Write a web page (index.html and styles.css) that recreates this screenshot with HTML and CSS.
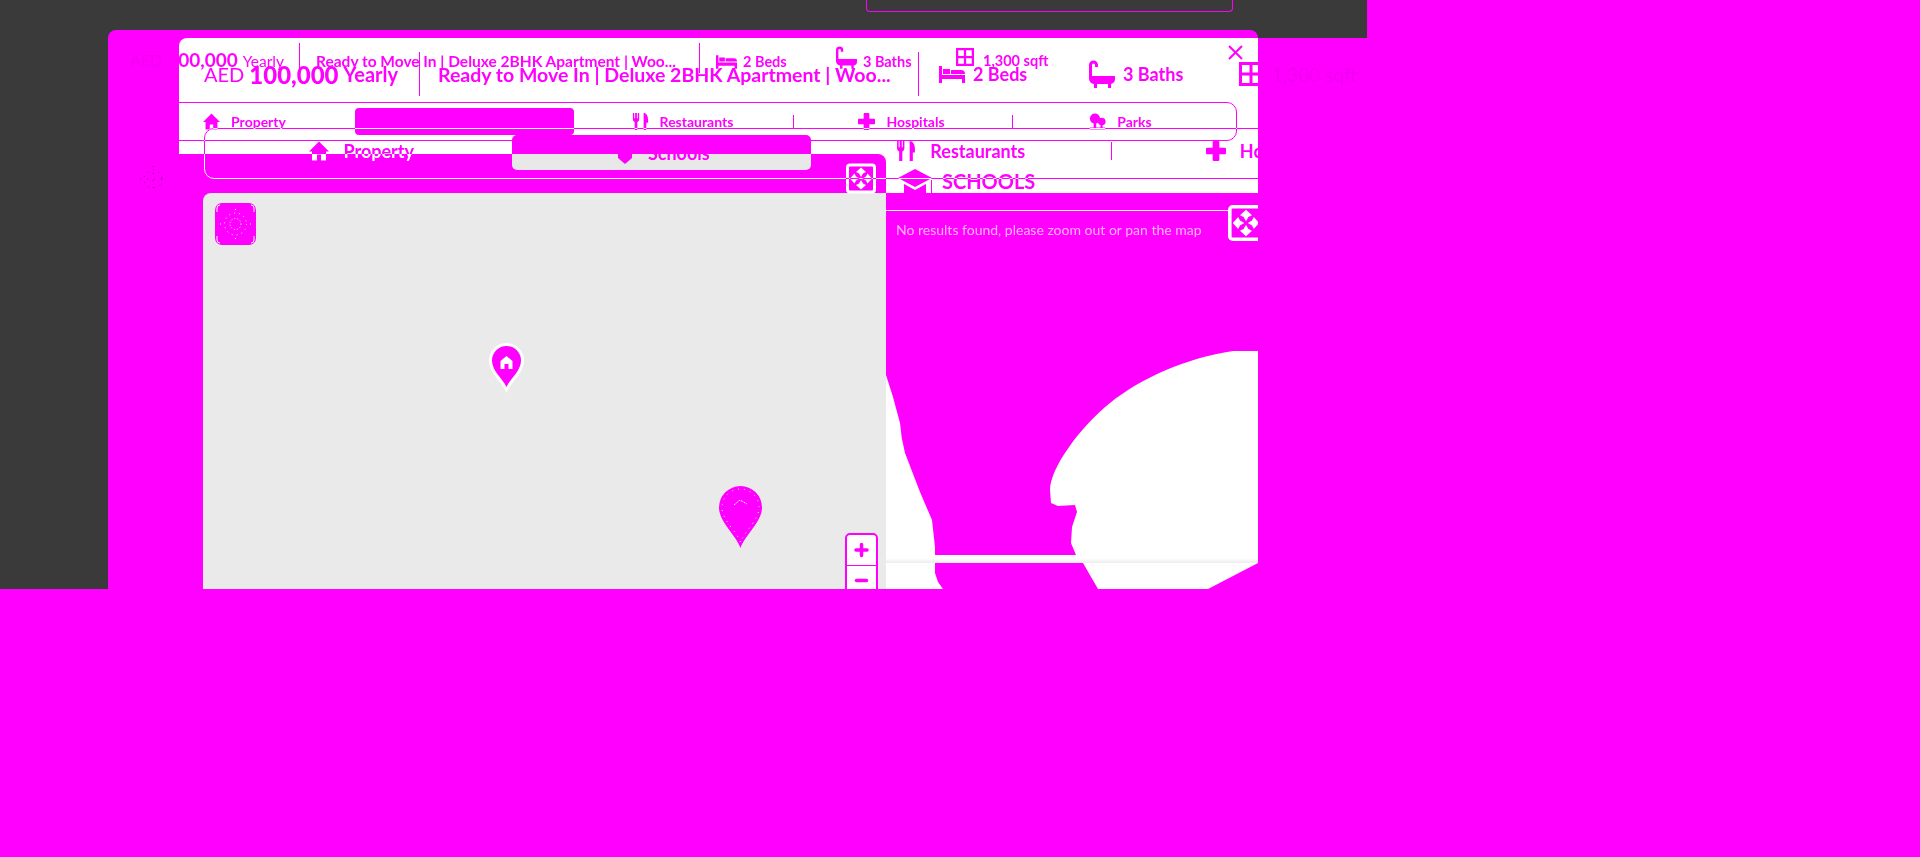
FILE: index.html
```html
<!DOCTYPE html>
<html lang="en">
<head>
    <title>Ready to Move In | Deluxe 2BHK Apartment</title>
    <meta charset="UTF-8">
    <meta name="viewport" content="width=device-width, initial-scale=1.0">
    <link rel="stylesheet" href="styles.css">
</head>
<body>
    <svg class="sprites" width="0" height="0">
        <symbol id="i-bed" viewBox="0 0 26 17"><path d="M0 0h3v9h23v8h-3v-4H3v4H0zM4 3h7v5H4zM12 4h10a4 4 0 0 1 4 4H12z"/></symbol>
        <symbol id="i-bath" viewBox="0 0 26 28"><path d="M0 5a4.500 4.500 0 0 1 9 0v2H6V5a1.500 1.500 0 0 0-3 0v11h23v3a5 5 0 0 1-4 5v4h-3v-4H8v4H5v-4a6 6 0 0 1-5-5z"/></symbol>
        <symbol id="i-window" viewBox="0 0 24 24"><path d="M1.500 1.500h21v21h-21zM12 1.500v21M1.500 12h21" fill="none" stroke="currentColor" stroke-width="3"/></symbol>
        <symbol id="i-house" viewBox="0 0 20 19"><path d="M10 0l10 10h-3v9h-5v-6H8v6H3v-9H0z"/></symbol>
        <symbol id="i-food" viewBox="0 0 17 19"><path d="M0 0h1.500v6h1V0h2v6h1V0H7v7a3 3 0 0 1-2 3v9H2v-9a3 3 0 0 1-2-3zM12 0c3 0 5 3 5 8v3h-2v8h-3z"/></symbol>
        <symbol id="i-plus" viewBox="0 0 18 18"><path d="M6 1a1 1 0 0 1 1-1h4a1 1 0 0 1 1 1v5h5a1 1 0 0 1 1 1v4a1 1 0 0 1-1 1h-5v5a1 1 0 0 1-1 1H7a1 1 0 0 1-1-1v-5H1a1 1 0 0 1-1-1V7a1 1 0 0 1 1-1h5z"/></symbol>
        <symbol id="i-tree" viewBox="0 0 20 19"><circle cx="7" cy="6" r="6"/><circle cx="15" cy="9.500" r="4.500"/><path d="M5.500 10h3v7h-3zM13.500 10h2.500v7h-2.500zM1 16.500h18V19H1z"/></symbol>
        <symbol id="i-cap" viewBox="0 0 34 24"><path d="M17 0l17 9-17 9L0 9zM6 15l11 6 11-6v9H6z"/></symbol>
        <symbol id="i-shield" viewBox="0 0 18 18"><path d="M9 0l9 5-2 1v6l-7 6-7-6V6L0 5z"/></symbol>
        <symbol id="i-expand" viewBox="0 0 30 30"><rect width="30" height="30" rx="4" fill="#fff"/><rect x="3" y="3" width="24" height="24" rx="1" fill="#f0f"/><path d="M15 13.500l-2-3.500-3-1.500 5-4.500 5 4.500-3 1.500zM15 16.500l2 3.500 3 1.500-5 4.500-5-4.500 3-1.500zM13.500 15l-3.500 2-1.500 3-4.500-5 4.500-5 1.500 3zM16.500 15l3.500-2 1.500-3 4.500 5-4.500 5-1.500-3z" fill="#fff"/></symbol>
    </svg>

    <div class="screen">
        <div class="topbar"><div class="search-box"></div></div>
        <div class="screen-row">
            <div class="sidebar"></div>
            <div class="modal">
                <span class="ghost ghost-aed">AED</span>
                <span class="ghost ghost-area">1,300 sqft</span>
                <svg class="ghost ghost-nav" width="26" height="26" viewBox="0 0 26 26"><circle cx="13" cy="13" r="9" fill="none" stroke="#900090" stroke-dasharray="1 5"/><path d="M13 0v26M0 13h26" stroke="#900090" stroke-dasharray="1 6"/></svg>

                <div class="sheet">
                    <div class="upper">
                        <div class="facts">
                            <div class="price"><span>AED</span> <b>100,000</b> <span>Yearly</span></div>
                            <div class="title">Ready to Move In | Deluxe 2BHK Apartment | Woo...</div>
                            <div class="spec"><svg class="icon-bed"><use href="#i-bed"/></svg>2 Beds</div>
                            <div class="spec"><svg class="icon-bath"><use href="#i-bath"/></svg>3 Baths</div>
                            <div class="spec spec-area"><svg class="icon-window"><use href="#i-window"/></svg>1,300 sqft</div>
                        </div>
                        <nav class="tabs">
                            <a class="tab"><svg><use href="#i-house"/></svg>Property</a>
                            <a class="tab tab-active"><svg><use href="#i-cap"/></svg>Schools</a>
                            <a class="tab"><svg><use href="#i-food"/></svg>Restaurants</a>
                            <a class="tab tab-line"><svg><use href="#i-plus"/></svg>Hospitals</a>
                            <a class="tab tab-line"><svg><use href="#i-tree"/></svg>Parks</a>
                        </nav>
                    </div>

                    <div class="lower">
                        <div class="map-col">
                            <div class="map">
                                <button class="locate">
                                    <svg width="41" height="42" viewBox="0 0 41 42"><path d="M2 9V5a3 3 0 0 1 3-3M36 2a3 3 0 0 1 3 3v4M39 33v4a3 3 0 0 1-3 3M5 40a3 3 0 0 1-3-3v-4" fill="none" stroke="#fff"/><circle cx="20.500" cy="21" r="11" fill="none" stroke="#fff" stroke-dasharray="1 4"/><circle cx="20.500" cy="21" r="5.500" fill="none" stroke="#fff" stroke-dasharray="1 2"/><path d="M20.500 6v1M20.500 35v1M5 21h1M35 21h1" stroke="#fff"/></svg>
                                </button>
                                <svg class="pin pin-home" width="35" height="50" viewBox="0 0 35 50"><path d="M17.500 50C14 40 0 30 0 17.500a17.500 17.500 0 0 1 35 0C35 30 21 40 17.500 50z" fill="#fff"/><path d="M17.500 44C14 36 3 28 3 17.500a14.500 14.500 0 0 1 29 0C32 28 21 36 17.500 44z" fill="#f0f"/><path d="M17.500 13l6 5v8h-4v-5h-4v5h-4v-8z" fill="#fff"/></svg>
                                <svg class="pin pin-school" width="43" height="62" viewBox="0 0 43 62"><path d="M21.500 62C17 49 0 36 0 21.500a21.500 21.500 0 0 1 43 0C43 36 26 49 21.500 62z" fill="#f0f"/><path d="M21.500 56C18 46 3 34 3 21.500a18.500 18.500 0 0 1 37 0C40 34 25 46 21.500 56z" fill="none" stroke="#fff" stroke-dasharray="1 5"/><path d="M15 19l6-5 7 4" fill="none" stroke="#fff" stroke-dasharray="2 1"/></svg>
                                <div class="zoom-ctl">
                                    <svg viewBox="0 0 29 29"><path d="M14.500 9v11M9 14.500h11" stroke="#f0f" stroke-width="3.500" stroke-linecap="round"/></svg>
                                    <svg viewBox="0 0 29 29"><path d="M9.500 14.500h10" stroke="#f0f" stroke-width="3.500" stroke-linecap="round"/></svg>
                                </div>
                            </div>
                            <svg class="expand expand-map"><use href="#i-expand"/></svg>
                        </div>

                        <section class="results">
                            <h2 class="results-title"><svg><use href="#i-cap"/></svg>SCHOOLS</h2>
                            <div class="results-body">
                                <svg class="backdrop" width="372" height="396" viewBox="0 0 372 396">
                                    <defs><linearGradient id="edge" x1="0" y1="0" x2="0" y2="1"><stop offset="0.4" stop-color="#fff"/><stop offset="1" stop-color="#ececec"/></linearGradient></defs>
                                    <rect width="372" height="396" fill="#fff"/>
                                    <path d="M0 0H372V158H347C300 165 255 185 224 210C195 233 164 275 164 297L165 310 172 313 189 312 191 319 186 334 185 350 190 362H49V354L46 327 34 299 19 260Q15 245 14 230L7 204 0 182z" fill="#f0f"/>
                                    <rect y="362" width="372" height="8" fill="url(#edge)"/>
                                    <path d="M49 370V380L52 389 57 396H212L197 370zM372 370L322 396H372z" fill="#f0f"/>
                                </svg>
                                <p class="results-msg">No results found, please zoom out or pan the map</p>
                                <svg class="expand expand-list"><use href="#i-expand"/></svg>
                            </div>
                        </section>
                    </div>

                    <div class="facts facts-big">
                        <div class="price"><span>AED</span> <b>100,000</b> <span>Yearly</span></div>
                        <div class="title">Ready to Move In | Deluxe 2BHK Apartment | Woo...</div>
                        <div class="spec"><svg class="icon-bed"><use href="#i-bed"/></svg>2 Beds</div>
                        <div class="spec"><svg class="icon-bath"><use href="#i-bath"/></svg>3 Baths</div>
                        <div class="spec spec-area"><svg class="icon-window"><use href="#i-window"/></svg></div>
                    </div>

                    <nav class="strip">
                        <div class="strip-frame"></div>
                        <a class="strip-tab"><svg><use href="#i-house"/></svg><span>Property</span></a>
                        <a class="strip-chip"><svg><use href="#i-shield"/></svg><span>Schools</span></a>
                        <a class="strip-tab"><svg><use href="#i-food"/></svg><span>Restaurants</span></a>
                        <a class="strip-tab strip-line"><svg><use href="#i-plus"/></svg><span>Hospitals</span></a>
                    </nav>

                    <button class="close" aria-label="Close"><svg width="15" height="15" viewBox="0 0 15 15"><path d="M1 1l13 13M14 1L1 14" stroke="#f0f" stroke-width="2"/></svg></button>
                </div>
            </div>
        </div>
    </div>
</body>
</html>
```

FILE: styles.css
```css
* {
    box-sizing: border-box;
}
body {
    margin: 0;
    height: 857px;
    overflow: hidden;
    background-color: #f0f;
    color: #f0f;
    font-family: Lato, "Liberation Sans", sans-serif;
}
.sprites {
    display: block;
}
svg {
    fill: currentColor;
}
.screen {
    width: 1367px;
    overflow: hidden;
}
.topbar {
    height: 38px;
    padding-left: 866px;
    background-color: #3a3a3a;
}
.search-box {
    width: 367px;
    height: 12px;
    border: 1px solid #f0f;
    border-top: none;
    border-radius: 0 0 4px 4px;
}
.screen-row {
    display: flex;
}
.sidebar {
    width: 108px;
    height: 551px;
    background-color: #3a3a3a;
}
.modal {
    position: relative;
    width: 1150px;
    height: 559px;
    margin-top: -8px;
    padding: 8px 0 0 71px;
    background-color: #f0f;
    border-radius: 8px 8px 0 0;
}
.ghost {
    position: absolute;
    color: #f200f2;
    font-size: 16px;
    white-space: nowrap;
}
.ghost-aed {
    left: 22px;
    top: 20px;
}
.ghost-area {
    left: 1164px;
    top: 33px;
    font-size: 19px;
}
.ghost-nav {
    left: 32px;
    top: 136px;
}

.sheet {
    position: relative;
    width: 1079px;
    height: 551px;
    overflow: hidden;
    background-color: #fff;
    border-radius: 8px 0 0 0;
}
.upper {
    height: 116px;
}

/* price row */
.facts {
    display: flex;
    height: 64px;
    padding-top: 5px;
    align-items: flex-start;
    font-size: 14.500px;
}
.price {
    display: flex;
    flex: none;
    width: 121px;
    height: 30px;
    padding: 5px 15px 0 0;
    gap: 5px;
    justify-content: flex-end;
    align-items: baseline;
    font-size: 15.500px;
    white-space: nowrap;
    border-right: 1px solid #f0f;
}
.price b {
    font-size: 19px;
}
.title {
    flex: none;
    width: 400px;
    height: 30px;
    padding: 9px 0 0 16px;
    font-size: 15.500px;
    font-weight: 700;
    white-space: nowrap;
    border-right: 1px solid #f0f;
}
.spec {
    display: flex;
    flex: none;
    width: 120px;
    height: 30px;
    padding-top: 7px;
    gap: 6px;
    align-items: center;
    font-weight: 700;
    white-space: nowrap;
}
.spec:nth-child(3) {
    margin-left: 16px;
}
.spec-area {
    padding-bottom: 3px;
    gap: 9px;
}
.icon-bed {
    width: 21px;
    height: 14px;
}
.icon-bath {
    width: 21px;
    height: 23px;
    margin-top: -8px;
}
.icon-window {
    width: 18px;
    height: 18px;
    margin-top: -6px;
}
.facts-big {
    position: absolute;
    left: 25px;
    top: 14px;
    height: 44px;
    padding: 0;
    align-items: center;
    font-size: 18px;
}
.facts-big .price {
    width: 216px;
    height: 44px;
    padding: 0;
    justify-content: flex-start;
    align-items: center;
    font-size: 20px;
    font-weight: 700;
    gap: 5px;
}
.facts-big .price b {
    font-size: 24px;
}
.facts-big .title {
    display: flex;
    width: 499px;
    height: 44px;
    padding: 0 0 0 18px;
    align-items: center;
    font-size: 19.500px;
}
.facts-big .spec {
    width: 150px;
    height: 44px;
    padding: 0;
    gap: 8px;
}
.facts-big .spec:nth-child(3) {
    margin-left: 20px;
}
.facts-big .icon-bed {
    width: 26px;
    height: 17px;
    margin-top: 0;
}
.facts-big .icon-bath {
    width: 26px;
    height: 28px;
    margin-top: 0;
}
.facts-big .icon-window {
    width: 24px;
    height: 24px;
    margin-top: 0;
}
.price span:first-child {
    font-weight: 400;
}

/* back tab row */
.tabs {
    display: grid;
    grid-template-columns: repeat(5, 219px);
    width: 1107px;
    height: 39px;
    margin-left: -49px;
    padding: 5px 11px 5px 5px;
    border: 1px solid #f0f;
    border-radius: 0 10px 10px 0;
}
.tab {
    position: relative;
    display: flex;
    gap: 11px;
    padding-right: 2px;
    justify-content: center;
    align-items: center;
    font-size: 14px;
    font-weight: 700;
}
.tab svg {
    width: 17px;
    height: 17px;
}
.tab-line::before {
    content: "";
    position: absolute;
    left: 0;
    top: 7px;
    height: 13px;
    border-left: 1px solid #f0f;
}
.tab-active {
    background-color: #f0f;
    border-radius: 4px;
}

/* lower half */
.lower {
    display: flex;
    height: 435px;
}
.map-col {
    position: relative;
    width: 707px;
    padding: 39px 0 0 24px;
    background-color: #f0f;
    border-radius: 0 8px 0 0;
}
.map {
    position: relative;
    height: 396px;
    overflow: hidden;
    background-color: #eaeaea;
    border-radius: 8px 0 0 0;
}
.locate {
    position: absolute;
    left: 12px;
    top: 10px;
    width: 41px;
    height: 42px;
    padding: 0;
    border: none;
    border-radius: 7px;
    background-color: #f0f;
}
.pin {
    position: absolute;
}
.pin-home {
    left: 286px;
    top: 150px;
}
.pin-school {
    left: 516px;
    top: 293px;
}
.zoom-ctl {
    position: absolute;
    left: 642px;
    top: 340px;
    display: flex;
    flex-direction: column;
    width: 33px;
    padding: 0;
    border: 2px solid #f0f;
    border-radius: 5px;
    background-color: #fff;
}
.zoom-ctl svg {
    display: block;
    width: 29px;
    height: 30px;
}
.zoom-ctl svg + svg {
    border-top: 1px solid #f0f;
}
.expand {
    position: absolute;
    width: 30px;
    height: 31px;
}
.expand-map {
    right: 10px;
    top: 9px;
}

/* schools column */
.results {
    width: 372px;
}
.results-title {
    position: relative;
    display: flex;
    height: 39px;
    margin: 0;
    padding: 15px 0 0 12px;
    gap: 10px;
    align-items: flex-start;
    overflow: hidden;
    font-size: 20px;
    line-height: 24px;
}
.results-title::after {
    content: "";
    position: absolute;
    left: 45px;
    top: 26px;
    height: 13px;
    border-left: 1px solid #f0f;
}
.results-title svg {
    flex: none;
    width: 34px;
    height: 24px;
}
.results-body {
    position: relative;
    height: 396px;
}
.backdrop {
    display: block;
}
.results-msg {
    position: absolute;
    left: 0;
    top: 17px;
    width: 342px;
    margin: 0;
    padding: 10px 0 0 10px;
    border-top: 1px solid #fff;
    font-size: 14px;
    color: #ffb4ff;
    white-space: nowrap;
}
.expand-list {
    left: 342px;
    top: 12px;
    width: 36px;
    height: 36px;
}

/* front tab row */
.strip {
    position: absolute;
    left: 25px;
    top: 90px;
    display: grid;
    grid-template-columns: repeat(4, 299.500px);
    width: 1300px;
    height: 51px;
    padding: 7px 8px;
    font-size: 18px;
    font-weight: 700;
}
.strip-frame {
    position: absolute;
    inset: 0;
    border: 1px solid #0f0;
    border-radius: 10px;
    mix-blend-mode: difference;
}
.strip-tab,
.strip-chip {
    display: flex;
    gap: 14px;
    justify-content: center;
    align-items: center;
}
.strip-tab {
    height: 31px;
}
.strip-tab svg {
    width: 20px;
    height: 20px;
}
.strip-tab svg,
.strip-tab span {
    color: #0f0;
    mix-blend-mode: difference;
}
.strip-chip {
    height: 35px;
    padding-left: 3px;
    border-radius: 5px;
    background: linear-gradient(#f0f 19px, #e8e8e8 19px);
}
.strip-chip svg {
    width: 18px;
    height: 18px;
    margin-top: 4px;
}
.strip-line {
    position: relative;
}
.strip-line::before {
    content: "";
    position: absolute;
    left: 0;
    top: 7px;
    height: 18px;
    border-left: 1px solid #f0f;
}
.close {
    position: absolute;
    left: 1049px;
    top: 7px;
    width: 15px;
    height: 15px;
    padding: 0;
    border: none;
    background: none;
}
```
